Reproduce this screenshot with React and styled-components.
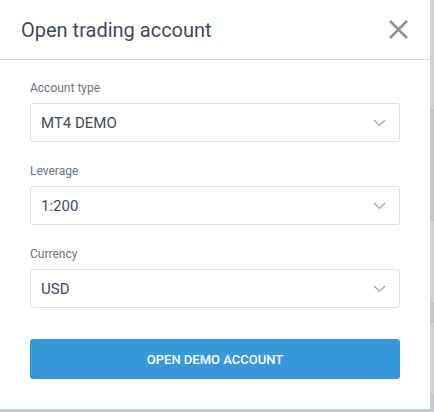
import { createGlobalStyle, styled } from 'styled-components';

const GlobalStyle = createGlobalStyle`
    html, body {
        margin: 0;
        padding: 0;
    }
    body {
        width: 434px;
        height: 412px;
        overflow: hidden;
        font-family: Roboto, "Liberation Sans", Arial, sans-serif;
        background: linear-gradient(
            to bottom,
            #cdd1d8 0px, #cdd1d8 109px,
            #c2c6cd 109px, #c2c6cd 221px,
            #cdd1d8 221px, #cdd1d8 302px,
            #c2c6cd 302px, #c2c6cd 323px,
            #cdd1d8 323px, #cdd1d8 395px,
            #c6cad1 395px
        );
    }
`;

const Modal = styled.div`
    width: 430px;
    height: 409px;
    background: #fff;
    box-sizing: border-box;
    display: flex;
    flex-direction: column;
`;

const Header = styled.div`
    height: 60px;
    box-sizing: border-box;
    border-bottom: 1px solid #d7dae0;
    display: flex;
    align-items: center;
    justify-content: space-between;
    padding: 0 20px 0 21px;
`;

const Title = styled.h2`
    margin: 0;
    font-size: 20px;
    font-weight: 400;
    color: #3f4a5e;
`;

const CloseButton = styled.button`
    border: 0;
    background: none;
    padding: 0;
    width: 24px;
    height: 24px;
    display: flex;
    align-items: center;
    justify-content: center;
    cursor: pointer;
`;

const Body = styled.div`
    padding: 21px 30px 0 30px;
    display: flex;
    flex-direction: column;
`;

const Field = styled.div`
    display: flex;
    flex-direction: column;
    gap: 8px;
    margin-bottom: 22px;
`;

const Label = styled.label`
    font-size: 12px;
    line-height: 14px;
    color: #6b7385;
`;

const Select = styled.div`
    height: 39px;
    box-sizing: border-box;
    border: 1px solid #dcdfe5;
    border-radius: 3px;
    display: flex;
    align-items: center;
    justify-content: space-between;
    padding: 0 13px 0 10px;
    font-size: 15px;
    color: #3f4a5e;
`;

const SubmitButton = styled.button`
    margin-top: 9px;
    height: 40px;
    border: 0;
    border-radius: 3px;
    background: #3799dc;
    color: #fff;
    font-family: inherit;
    font-size: 13px;
    font-weight: 500;
    text-transform: uppercase;
    cursor: pointer;
`;

const Chevron = () => (
    <svg width="13" height="8" viewBox="0 0 13 8" fill="none">
        <path d="M1 1l5.5 5.5L12 1" stroke="#9aa1ae" strokeWidth="1.1" />
    </svg>
);

const CloseIcon = () => (
    <svg width="21" height="21" viewBox="0 0 21 21">
        <path d="M2 2l17 17M19 2L2 19" stroke="#8a93a3" strokeWidth="2.6" />
    </svg>
);

const fields = [
    { label: 'Account type', value: 'MT4 DEMO' },
    { label: 'Leverage', value: '1:200' },
    { label: 'Currency', value: 'USD' },
];

export default function App() {
    return (
        <>
            <GlobalStyle />
            <Modal>
                <Header>
                    <Title>Open trading account</Title>
                    <CloseButton aria-label="close">
                        <CloseIcon />
                    </CloseButton>
                </Header>
                <Body>
                    {fields.map((f) => (
                        <Field key={f.label}>
                            <Label>{f.label}</Label>
                            <Select>
                                <span>{f.value}</span>
                                <Chevron />
                            </Select>
                        </Field>
                    ))}
                    <SubmitButton>Open demo account</SubmitButton>
                </Body>
            </Modal>
        </>
    );
}
